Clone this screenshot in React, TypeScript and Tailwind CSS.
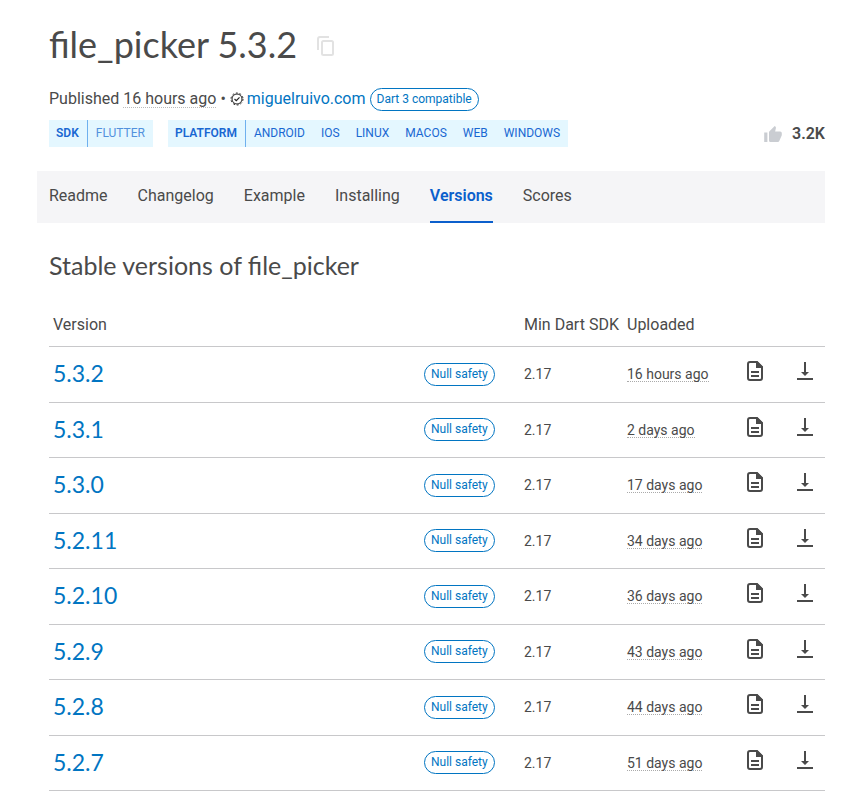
import type { ReactNode } from "react";

const versions = [
  { version: "5.3.2", sdk: "2.17", uploaded: "16 hours ago" },
  { version: "5.3.1", sdk: "2.17", uploaded: "2 days ago" },
  { version: "5.3.0", sdk: "2.17", uploaded: "17 days ago" },
  { version: "5.2.11", sdk: "2.17", uploaded: "34 days ago" },
  { version: "5.2.10", sdk: "2.17", uploaded: "36 days ago" },
  { version: "5.2.9", sdk: "2.17", uploaded: "43 days ago" },
  { version: "5.2.8", sdk: "2.17", uploaded: "44 days ago" },
  { version: "5.2.7", sdk: "2.17", uploaded: "51 days ago" },
];

const tabs = ["Readme", "Changelog", "Example", "Installing", "Versions", "Scores"];

function Pill({ children }: { children: ReactNode }) {
  return (
    <span className="inline-flex h-[23px] items-center whitespace-nowrap rounded-full border border-[#0175c2] px-1.5 pb-px text-xs text-[#0175c2]">
      {children}
    </span>
  );
}

function TagGroup({ label, tags }: { label: string; tags: string[] }) {
  return (
    <div className="flex h-[27px] items-center bg-[#e4f7ff] text-xs text-[#1967d2]">
      <span className="flex h-full items-center border-r border-[#6fb0ee] pb-0.5 pl-[7px] pr-2 font-semibold">
        {label}
      </span>
      <div className="flex gap-4 px-2 pb-0.5">
        {tags.map((tag) => (
          <a key={tag} href={"#" + tag.toLowerCase()} className={tag === "FLUTTER" ? "text-[#5291dd]" : ""}>
            {tag}
          </a>
        ))}
      </div>
    </div>
  );
}

function DocumentIcon() {
  return (
    <svg viewBox="0 0 16 20" className="h-5 w-4" fill="none" stroke="#4a4a4a" strokeWidth="2" aria-hidden="true">
      <path d="M10 1H3a2 2 0 0 0-2 2v14a2 2 0 0 0 2 2h10a2 2 0 0 0 2-2V6z" />
      <path d="M9 0h1l6 6v1H9z" fill="#4a4a4a" stroke="none" />
      <path d="M4 11h8M4 15h8" />
    </svg>
  );
}

function DownloadIcon() {
  return (
    <svg viewBox="0 0 16 18" className="h-[18px] w-4" fill="#4a4a4a" aria-hidden="true">
      <path d="M7 0h2v10h3l-4 4-4-4h3zM0 16h16v2H0z" />
    </svg>
  );
}

function VerifiedIcon() {
  return (
    <svg viewBox="0 0 14 14" className="size-[14px]" fill="none" stroke="#222" aria-hidden="true">
      <circle cx="7" cy="7" r="5" />
      <circle cx="7" cy="7" r="6" strokeDasharray="1.900 1.870" />
      <path d="m4.500 7 1.800 1.700 3.200-3.300" strokeWidth="1.200" />
    </svg>
  );
}

export default function App() {
  return (
    <main className="bg-white pl-[37px] pr-[39px] font-[Roboto,sans-serif] text-base text-[#4a4a4a]">
      <header className="pl-3">
        <div className="flex h-[86px] items-center gap-5 pb-1 pt-1.5">
          <h1 className="font-[Lato,sans-serif] text-4xl">file_picker 5.3.2</h1>
          <button type="button" aria-label="Copy package version" className="pt-1">
            <svg viewBox="0 0 18 20" className="h-5 w-[18px]" fill="none" stroke="#e2e2e2" strokeWidth="2" aria-hidden="true">
              <path d="M1 14V3a2 2 0 0 1 2-2h9" />
              <rect x="5" y="5" width="11" height="14" rx="1.500" />
            </svg>
          </button>
        </div>
        <div className="flex h-[26px] items-center">
          <span>
            Published{" "}
            <span className="inline-block border-b border-dotted border-[#bbb] leading-4">16 hours ago</span> •
          </span>
          <span className="flex items-center gap-[3px] px-1">
            <VerifiedIcon />
            <a href="#publisher" className="text-[#0175c2]">
              miguelruivo.com
            </a>
          </span>
          <Pill>Dart 3 compatible</Pill>
        </div>
        <div className="mt-2 flex items-center justify-between">
          <div className="flex gap-[15px]">
            <TagGroup label="SDK" tags={["FLUTTER"]} />
            <TagGroup label="PLATFORM" tags={["ANDROID", "IOS", "LINUX", "MACOS", "WEB", "WINDOWS"]} />
          </div>
          <button type="button" aria-label="Like this package" className="flex items-center gap-2.5 font-semibold">
            <svg viewBox="1 1 22 20" className="h-4 w-[18px]" fill="#cacdd2" aria-hidden="true">
              <path d="M1 21h4V9H1v12zm22-11c0-1.100-.9-2-2-2h-6.310l.950-4.570.030-.320c0-.410-.170-.790-.440-1.060L14.170 1 7.590 7.590C7.220 7.950 7 8.450 7 9v10c0 1.100.9 2 2 2h9c.830 0 1.540-.5 1.840-1.220l3.020-7.050c.090-.230.140-.470.140-.730v-2z" />
            </svg>
            3.2K
          </button>
        </div>
      </header>

      <nav className="mt-6 flex h-[52px] gap-[30px] bg-[#f5f5f7] px-3">
        {tabs.map((tab) => (
          <a
            key={tab}
            href={"#" + tab.toLowerCase()}
            className={
              tab === "Versions"
                ? "border-b-2 border-[#0b5fcc] pt-[13px] font-semibold text-[#0b5fcc]"
                : "pt-[13px]"
            }
          >
            {tab}
          </a>
        ))}
      </nav>

      <section className="pl-3 pt-[26px]">
        <h2 className="font-[Lato,sans-serif] text-[25px] leading-8">Stable versions of file_picker</h2>
        <table className="mt-[23px] w-full table-fixed border-collapse text-left">
          <thead>
            <tr className="h-[42px] border-b border-[#c8c8ca]">
              <th className="px-1 font-normal">Version</th>
              <th className="w-[100px] font-normal" aria-label="Badges" />
              <th className="w-[103px] whitespace-nowrap font-normal">Min Dart SDK</th>
              <th className="w-[102px] font-normal">Uploaded</th>
              <th className="w-[51px]" aria-label="Documentation" />
              <th className="w-[45px]" aria-label="Download" />
            </tr>
          </thead>
          <tbody>
            {versions.map((row) => (
              <tr key={row.version} className="border-b border-[#c8c8ca] odd:h-14 even:h-[55px]">
                <td className="px-1 pb-0.5 font-[Lato,sans-serif] text-[23px] leading-8">
                  <a href={"#" + row.version} className="text-[#0175c2]">
                    {row.version}
                  </a>
                </td>
                <td className="leading-4">
                  <Pill>Null safety</Pill>
                </td>
                <td className="text-sm">{row.sdk}</td>
                <td className="text-sm">
                  <span className="inline-block border-b border-dotted border-[#aaa] leading-[14px]">
                    {row.uploaded}
                  </span>
                </td>
                <td className="pb-1.5 pl-[18px]">
                  <a href={"#docs-" + row.version} aria-label={"Documentation of " + row.version} className="block">
                    <DocumentIcon />
                  </a>
                </td>
                <td className="pb-1.5 pl-[17px]">
                  <a href={"#archive-" + row.version} aria-label={"Download " + row.version} className="block">
                    <DownloadIcon />
                  </a>
                </td>
              </tr>
            ))}
          </tbody>
        </table>
      </section>
    </main>
  );
}
